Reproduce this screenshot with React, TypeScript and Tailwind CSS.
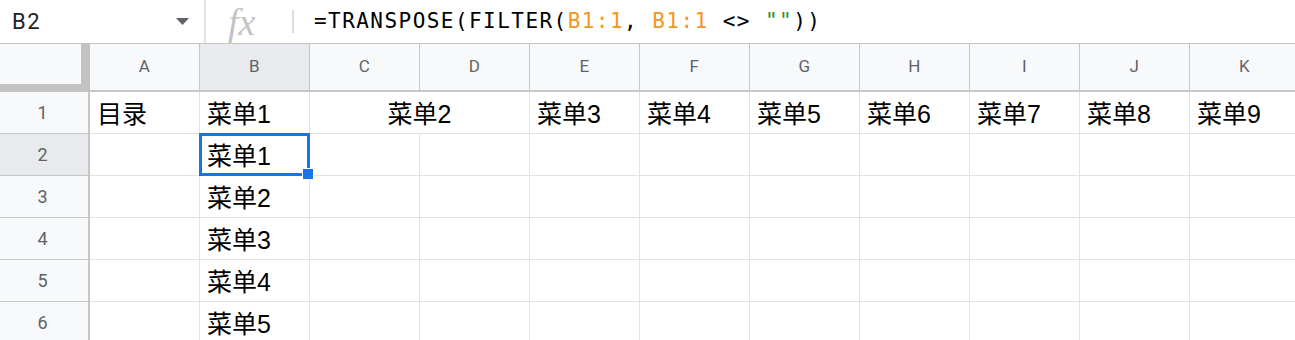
import React from "react";

const COLS = ["A", "B", "C", "D", "E", "F", "G", "H", "I", "J", "K"];

const cellFont = {
    fontFamily: '"Liberation Sans", "Noto Sans CJK SC", sans-serif',
};

function FormulaBar() {
    return (
        <div className="flex h-[44px] border-b border-[#c4c7c5] bg-white">
            <div className="flex w-[204px] items-center justify-between pl-3 pr-[15px]">
                <span className="text-[22px] leading-none tracking-[1.5px] text-[#202124] font-[family-name:Roboto,sans-serif]">
                    B2
                </span>
                <svg width="13" height="7" viewBox="0 0 13 7">
                    <path d="M0 0h13L6.5 7z" fill="#5f6368" />
                </svg>
            </div>
            <div className="w-[2px] self-stretch bg-[#e3e3e3]" />
            <div className="flex w-[86px] items-center pl-[22px]">
                <span className="text-[38px] leading-none italic text-[#c4c4c4] font-[family-name:'Liberation_Serif',serif]">
                    fx
                </span>
            </div>
            <div className="my-auto h-[23px] w-[2px] bg-[#dadce0]" />
            <div className="flex items-center pl-[20px] text-[21px] tracking-[1.45px] text-black font-[family-name:'DejaVu_Sans_Mono',monospace]">
                <span>=TRANSPOSE(FILTER(</span>
                <span className="text-[#f4961c]">B1:1</span>
                <span>,&nbsp;</span>
                <span className="text-[#f4961c]">B1:1</span>
                <span>&nbsp;&lt;&gt;&nbsp;</span>
                <span className="text-[#27922a]">""</span>
                <span>))</span>
            </div>
        </div>
    );
}

function HeaderRow() {
    return (
        <div className="flex h-[48px]">
            <div className="h-[48px] w-[90px] shrink-0 border-r-[9px] border-b-[8px] border-[#c2c2c2] bg-[#f8f9fa]" />
            {COLS.map((c) => (
                <div
                    key={c}
                    className={
                        "flex h-[48px] w-[110px] shrink-0 items-center justify-center border-r border-b-2 border-[#c4c7c5] text-[17px] tracking-[0.5px] text-[#5f6368] font-[family-name:Roboto,sans-serif] " +
                        (c === "B" ? "bg-[#e8eaed]" : "bg-[#f8f9fa]")
                    }
                >
                    {c}
                </div>
            ))}
        </div>
    );
}

function Cell({
    text,
    wide,
    center,
    selected,
}: {
    text?: string;
    wide?: boolean;
    center?: boolean;
    selected?: boolean;
}) {
    return (
        <div
            style={cellFont}
            className={
                "relative flex h-[42px] shrink-0 items-end border-r border-b border-[#e2e3e3] pb-[2px] text-[25px] leading-[34px] text-black " +
                (wide ? "w-[220px] " : "w-[110px] ") +
                (center ? "justify-center" : "pl-[7px]")
            }
        >
            {text}
            {selected && (
                <div className="absolute -top-px -left-px -right-px -bottom-px z-10 border-[3px] border-[#1a73e8]">
                    <div className="absolute right-[-7px] bottom-[-7px] h-[12px] w-[12px] border border-white bg-[#1a73e8]" />
                </div>
            )}
        </div>
    );
}

function RowHead({ n, active }: { n: number; active?: boolean }) {
    return (
        <div
            className={
                "flex h-[42px] w-[90px] shrink-0 items-center justify-center border-r-2 border-b border-[#c4c7c5] pr-[3px] text-[18px] text-[#5f6368] font-[family-name:Roboto,sans-serif] " +
                (active ? "bg-[#e8eaed]" : "bg-[#f8f9fa]")
            }
        >
            {n}
        </div>
    );
}

export default function App() {
    const menus = ["菜单3", "菜单4", "菜单5", "菜单6", "菜单7", "菜单8", "菜单9"];

    return (
        <div className="h-[340px] w-[1295px] overflow-hidden bg-white">
            <FormulaBar />
            <HeaderRow />
            <div className="flex">
                <RowHead n={1} />
                <Cell text="目录" />
                <Cell text="菜单1" />
                <Cell text="菜单2" wide center />
                {menus.map((m) => (
                    <Cell key={m} text={m} />
                ))}
            </div>
            {[2, 3, 4, 5, 6].map((r) => (
                <div key={r} className="flex">
                    <RowHead n={r} active={r === 2} />
                    {COLS.map((c) => (
                        <Cell
                            key={c}
                            text={c === "B" ? `菜单${r - 1}` : undefined}
                            selected={c === "B" && r === 2}
                        />
                    ))}
                </div>
            ))}
        </div>
    );
}
